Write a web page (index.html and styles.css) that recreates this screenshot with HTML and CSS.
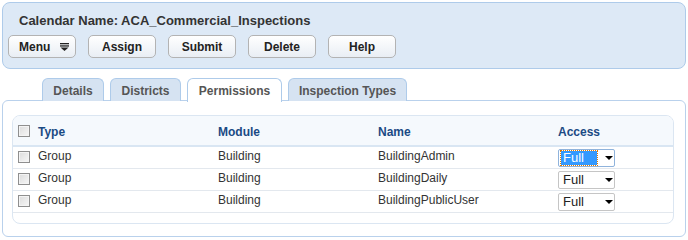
FILE: index.html
```html
<!DOCTYPE html>
<html lang="en">
<head>
  <meta charset="UTF-8" />
  <title>Calendar Permissions</title>
  <link rel="stylesheet" href="styles.css">
</head>
<body>

  <div class="header-panel">
    <h1>Calendar Name: ACA_Commercial_Inspections</h1>
    <div class="toolbar">
      <button class="btn btn-menu">Menu
        <svg class="menu-icon" width="9" height="8" viewBox="0 0 9 8">
          <rect x="0" y="0" width="9" height="1.3" fill="#222"/>
          <rect x="0" y="2.3" width="9" height="1.3" fill="#222"/>
          <path d="M0.5 4.6 H8.5 L4.5 8 Z" fill="#222"/>
        </svg>
      </button>
      <button class="btn">Assign</button>
      <button class="btn">Submit</button>
      <button class="btn">Delete</button>
      <button class="btn">Help</button>
    </div>
  </div>

  <div class="tabs">
    <div class="tab">Details</div>
    <div class="tab">Districts</div>
    <div class="tab active">Permissions</div>
    <div class="tab">Inspection Types</div>
  </div>

  <div class="content-panel">
    <div class="grid-box">
      <table class="grid">
        <thead>
          <tr>
            <th class="col-check"><span class="check"></span></th>
            <th class="col-type">Type</th>
            <th class="col-module">Module</th>
            <th class="col-name">Name</th>
            <th class="col-access">Access</th>
          </tr>
        </thead>
        <tbody>
          <tr>
            <td class="col-check"><span class="check"></span></td>
            <td>Group</td>
            <td>Building</td>
            <td>BuildingAdmin</td>
            <td><span class="select focused"><span class="select-value">Full</span><span class="caret"></span></span></td>
          </tr>
          <tr>
            <td class="col-check"><span class="check"></span></td>
            <td>Group</td>
            <td>Building</td>
            <td>BuildingDaily</td>
            <td><span class="select"><span class="select-value">Full</span><span class="caret"></span></span></td>
          </tr>
          <tr>
            <td class="col-check"><span class="check"></span></td>
            <td>Group</td>
            <td>Building</td>
            <td>BuildingPublicUser</td>
            <td><span class="select"><span class="select-value">Full</span><span class="caret"></span></span></td>
          </tr>
        </tbody>
      </table>
    </div>
  </div>

</body>
</html>
```

FILE: styles.css
```css
* {
  margin: 0;
  padding: 0;
  box-sizing: border-box;
}

body {
  font-family: 'Liberation Sans', Arial, sans-serif;
  font-size: 12px;
  color: #333333;
  background: #ffffff;
  padding: 2px;
  width: 688px;
}

.header-panel {
  background: #dde9f6;
  border: 1px solid #aecbea;
  border-radius: 8px;
  height: 67px;
  padding: 10px 0 0 5px;
}

.header-panel h1 {
  font-size: 13px;
  font-weight: bold;
  color: #333333;
  padding-left: 11px;
  line-height: 16px;
}

.toolbar {
  display: flex;
  gap: 12px;
  margin-top: 6px;
}

.btn {
  width: 68px;
  height: 23px;
  border: 1px solid #b3b3b3;
  border-radius: 5px;
  background: linear-gradient(#ffffff, #e9eef4);
  font-family: inherit;
  font-size: 12px;
  font-weight: bold;
  color: #222222;
}

.btn-menu {
  text-align: left;
  padding-left: 10px;
}

.menu-icon {
  margin-left: 6px;
  vertical-align: 0;
}

.tabs {
  display: flex;
  gap: 6px;
  padding-left: 40px;
  margin-top: 9px;
  height: 23px;
}

.tab {
  background: #d6e3f2;
  border: 1px solid #aecbea;
  border-bottom: none;
  border-radius: 6px 6px 0 0;
  height: 23px;
  padding-top: 4px;
  font-weight: bold;
  font-size: 12px;
  color: #555555;
  line-height: 16px;
  text-align: center;
  white-space: nowrap;
}

.tab:nth-child(1) { width: 62px; }
.tab:nth-child(2) { width: 71px; }
.tab:nth-child(3) { width: 95px; }
.tab:nth-child(4) { width: 119px; }

.tab.active {
  background: #ffffff;
  height: 24px;
  position: relative;
  z-index: 1;
}

.content-panel {
  border: 1px solid #b9d1ec;
  border-radius: 6px;
  height: 137px;
  margin-top: -1px;
  padding: 14px 11px 0 9px;
}

.grid-box {
  border: 1px solid #dbe6f2;
  border-radius: 8px;
  height: 109px;
  overflow: hidden;
}

.grid {
  width: 100%;
  border-collapse: collapse;
}

.grid th {
  background: #f5f9fd;
  height: 30px;
  text-align: left;
  font-weight: bold;
  color: #1b4a84;
  font-size: 12px;
  padding-top: 2px;
  border-bottom: 2px solid #d9e6f3;
}

.grid td {
  height: 22px;
  padding: 1px 0 0;
  line-height: 16px;
  border-bottom: 1px solid #e3e8ee;
  vertical-align: top;
}

.col-check {
  width: 25px;
  padding-left: 5px;
}

.grid td.col-check {
  padding: 1px 0 0 5px;
}

.col-type { width: 180px; }
.col-module { width: 160px; }
.col-name { width: 180px; }

.check {
  display: block;
  width: 12px;
  height: 12px;
  border: 1px solid #8f8f8f;
  background: linear-gradient(135deg, #dcdcdc, #f7f7f7);
  box-shadow: inset 0 0 0 1px #f4f4f4;
}

.grid th .check {
  margin-top: -1px;
}

.grid td .check {
  margin-top: 3px;
}

.select {
  display: flex;
  align-items: center;
  width: 57px;
  height: 18px;
  border: 1px solid #c5c5c5;
  border-radius: 2px;
  background: #ffffff;
  padding-left: 2px;
  margin-top: 1px;
  font-size: 13px;
  color: #222222;
}

.select.focused {
  border-color: #8fb3dc;
}

.select-value {
  padding: 0 2px;
  line-height: 14px;
  width: 36px;
}

.select.focused .select-value {
  background: #3399ff;
  color: #ffffff;
  outline: 1px dotted #e07a00;
}

.caret {
  width: 0;
  height: 0;
  border-left: 4px solid transparent;
  border-right: 4px solid transparent;
  border-top: 4px solid #000000;
  margin-left: 8px;
}
```
